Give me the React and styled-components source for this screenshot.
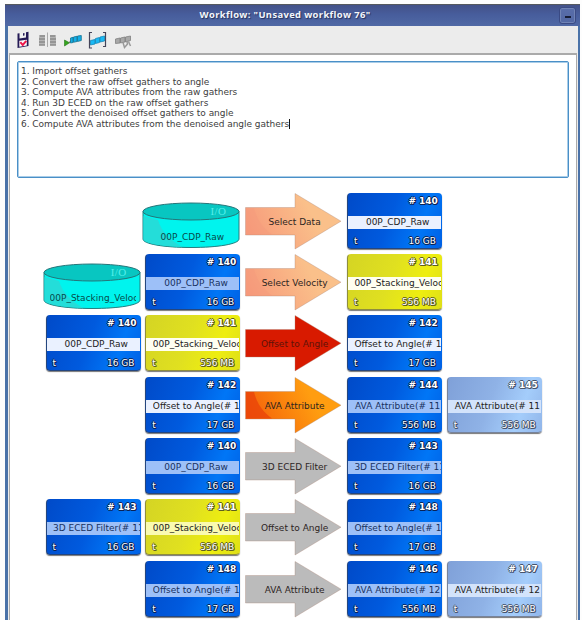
import React from "react";
import styled, { createGlobalStyle, css } from "styled-components";

const GlobalStyle = createGlobalStyle`
  * { box-sizing: border-box; }
  body { margin: 0; background: #fff; overflow: hidden; }
`;

const Page = styled.div`
  width: 582px;
  height: 620px;
  padding: 4px 2px 0 5px;
  overflow: hidden;
  background: #fdfdfd;
  font-family: "DejaVu Sans", sans-serif;
  font-size: 9px;
  color: #222;
`;

const Window = styled.div`
  height: 616px;
  display: flex;
  flex-direction: column;
  border: solid #4a72a8;
  border-width: 0 2px 0 3px;
  background: #ececec;
`;

const TitleBar = styled.header`
  flex: none;
  height: 22px;
  margin: 0 -2px 0 -3px;
  padding: 0 3px 0 0;
  display: grid;
  grid-template-columns: 6px 1fr 18px;
  align-items: center;
  border-top: 1px solid #55595f;
  background: linear-gradient(#435188, #475d9c 45%, #5069a5);
`;

const Title = styled.h1`
  margin: -2px 0 0;
  text-align: center;
  font: bold 9.4px/20px "Open Sans", sans-serif;
  letter-spacing: 0.37px;
  color: #f4f6fb;
  text-shadow: 1px 1px 1px #26335d;
  white-space: pre;
`;

const Minimize = styled.button`
  width: 17px;
  height: 17px;
  padding: 8px 0 0;
  display: flex;
  justify-content: center;
  border: 1px solid #3a4a84;
  border-radius: 3px;
  background: linear-gradient(#596da9, #5268a4);
  box-shadow: inset 0 0 0 1px #7083b5;
  &::before {
    content: "";
    width: 6px;
    height: 2px;
    background: #171d36;
  }
`;

const Toolbar = styled.div`
  flex: none;
  height: 27px;
  padding: 5px 0 0 9px;
  display: flex;
  align-items: flex-start;
  background: #ececec;
`;

const ToolIcon = styled.svg`
  flex: none;
  width: ${(p) => p.$w}px;
  height: 19px;
  margin-right: ${(p) => p.$gap || 0}px;
`;

const Content = styled.main`
  flex: 1;
  min-height: 0;
  margin: 0 1px;
  padding: 6px 6px 0 6px;
  border: solid #aaa;
  border-width: 2px 1px 0 1px;
  background: #fff;
  overflow: hidden;
`;

const Notes = styled.div`
  width: 552px;
  height: 117px;
  margin-left: 1px;
  padding: 3px 3px;
  border: 1px solid #4a8fc7;
  border-radius: 2px;
  box-shadow: inset 0 0 0 1px #a9cde8;
  background: #fff;
`;

const NoteLine = styled.div`
  height: 10.55px;
  line-height: 12px;
  white-space: pre;
  color: #404040;
  font-size: 9px;
  letter-spacing: -0.03px;
`;

const Caret = styled.span`
  display: inline-block;
  width: 1px;
  height: 10px;
  background: #111;
  vertical-align: -2px;
`;

const Flow = styled.div`
  padding: 14.5px 0 0 29.5px;
  display: flex;
  flex-direction: column;
  gap: 5.4px;
`;

const Step = styled.div`
  height: 56px;
  display: grid;
  grid-template-columns: 95px 95px 97px 95px 95px;
  column-gap: 4.8px;
  align-items: start;
`;

const palettes = {
  blue: { bg: "linear-gradient(110deg, #004ac8, #005ade 45%, #0076f6 75%, #0060e4)", line: "#24467f", outline: "#0a2254" },
  yellow: { bg: "linear-gradient(110deg, #d4d424, #e0e020 45%, #eeee10 75%, #dede18)", line: "#8e8d3e", outline: "#5d5d20" },
  pale: { bg: "linear-gradient(110deg, #7fa0d8, #8fb2e6 45%, #a4cdfb 75%, #91b5e9)", line: "#77839b", outline: "#46536b" },
};

const bands = {
  blue: "#9dc0f8",
  white: "#eaf1ff",
  pale: "#d3e3fb",
  cream: "#fffff0",
  lemon: "#fafab0",
};

const CardBox = styled.article`
  grid-column: ${(p) => p.$col};
  grid-row: 1;
  height: 56px;
  display: grid;
  grid-template-columns: minmax(0, 1fr);
  grid-template-rows: 22px 13px 1fr;
  border: 1px solid ${(p) => palettes[p.$tone].line};
  border-top-color: transparent;
  border-right-color: transparent;
  border-radius: 4px;
  background: ${(p) => palettes[p.$tone].bg} border-box;
  box-shadow: 0 1px 1px #777;
  overflow: hidden;
`;

const outlined = css`
  color: #fff;
  text-shadow: ${(p) => {
    const c = palettes[p.$tone].outline;
    return `1px 0 ${c}, -1px 0 ${c}, 0 1px ${c}, 0 -1px ${c}, 1px 1px ${c}`;
  }};
`;

const CardNumber = styled.div`
  ${outlined}
  padding-right: 3px;
  text-align: right;
  font-weight: bold;
  font-size: 9px;
  line-height: 15px;
  white-space: pre;
`;

const CardName = styled.div`
  margin: 0 -1px;
  padding: 0 1px 0 7.5px;
  background: ${(p) => bands[p.$band]};
  display: flex;
`;

const NameText = styled.span`
  flex: 1;
  min-width: 0;
  overflow: hidden;
  display: flex;
  justify-content: safe center;
  white-space: pre;
  line-height: 13px;
  color: ${(p) => (p.$band === "blue" ? "#17315f" : "#222")};
`;

const CardFoot = styled.div`
  ${outlined}
  padding: 0 5px 0 6px;
  display: flex;
  justify-content: space-between;
  line-height: 24px;
  font-size: 9px;
`;

const Overlay = styled.div`
  grid-column: ${(p) => p.$col};
  grid-row: 1;
  display: grid;
  & > * { grid-area: 1 / 1; }
`;

const ArrowShape = styled.svg`
  width: 97px;
  height: 57px;
  display: block;
`;

const ArrowLabel = styled.span`
  width: 97px;
  margin-left: 1px;
  text-align: center;
  line-height: 59px;
  white-space: pre;
  color: ${(p) => (p.$tone === "red" ? "#5f1208" : "#2d251f")};
`;

const DiskShape = styled.svg`
  width: 99px;
  height: 47px;
  margin: 9px 0 0 -4px;
  display: block;
`;

const DiskTag = styled.span`
  justify-self: end;
  margin: 11px 14px 0 0;
  font: 11px/14px "Liberation Serif", serif;
  letter-spacing: 0.4px;
  color: #55eeea;
`;

const DiskName = styled.span`
  margin: 37px 0 0 4px;
  width: 86px;
  height: 14px;
  overflow: hidden;
  display: flex;
  justify-content: safe center;
  line-height: 14px;
  white-space: pre;
  color: #064b4b;
`;

const arrowFills = {
  peach: ["#f79a7b", "#fac08a"],
  red: ["#d81a00", "#d81a00"],
  orange: ["#f4600a", "#ff9d10"],
  gray: ["#bbb", "#bbb"],
};

function Card({ col, id, name, size, tone = "blue", band = "blue" }) {
  return (
    <CardBox $col={col} $tone={tone}>
      <CardNumber $tone={tone}># {id}</CardNumber>
      <CardName $band={band}><NameText $band={band}>{name}</NameText></CardName>
      <CardFoot $tone={tone}><span>t</span><span>{size}</span></CardFoot>
    </CardBox>
  );
}

function Disk({ col, name }) {
  return (
    <Overlay $col={col}>
      <DiskShape viewBox="0 0 99 47">
        <path d="M2 9.500V37C2 42 23 45.500 50 45.500S98 42 98 37V9.500Z" fill="#00f4ee" stroke="#267d7f" />
        <path d="M2.500 14L17 18C21 31 30 38 41 45C18 44 3 41 2.500 37Z" fill="#24ddd9" />
        <ellipse cx="50" cy="9.500" rx="48" ry="8.500" fill="#08c6c1" stroke="#257579" />
      </DiskShape>
      <DiskTag>I/O</DiskTag>
      <DiskName>{name}</DiskName>
    </Overlay>
  );
}

function Arrow({ tone, label }) {
  const [from, to] = arrowFills[tone];
  const shine = tone === "peach" ? "#f3987c" : "#e83f08";
  return (
    <Overlay $col={3}>
      <ArrowShape viewBox="0 0 97 57">
        <defs>
          <linearGradient id={`arrow-${tone}`} x1="0" y1="0.6" x2="1" y2="0.3">
            <stop offset="0" stopColor={from} />
            <stop offset="0.7" stopColor={to} />
          </linearGradient>
        </defs>
        <path d="M0.500 14.500H50V0.500L96 28.200L50 56V42H0.500Z" fill={`url(#arrow-${tone})`} stroke="#a98576" strokeOpacity="0.5" strokeWidth="0.700" />
        {(tone === "peach" || tone === "orange") && (
          <path d="M1 15H9C12 27 18 35 27 41.500H1Z" fill={shine} opacity={tone === "peach" ? 0.35 : 0.7} />
        )}
      </ArrowShape>
      <ArrowLabel $tone={tone}>{label}</ArrowLabel>
    </Overlay>
  );
}

const raw = { id: 140, name: "00P_CDP_Raw", size: "16 GB" };
const velocity = { id: 141, name: "00P_Stacking_Veloc", size: "556 MB", tone: "yellow", band: "cream" };
const ava = (id, n) => ({ id, name: `AVA Attribute(# ${n}`, size: "556 MB" });
const angle = (id) => ({ id, name: "Offset to Angle(# 1", size: "17 GB" });
const eced = { id: 143, name: "3D ECED Filter(# 11", size: "16 GB" };

const steps = [
  { arrow: ["peach", "Select Data"], disk: [2, "00P_CDP_Raw"], cards: [{ ...raw, col: 4, band: "white" }] },
  { arrow: ["peach", "Select Velocity"], disk: [1, "00P_Stacking_Veloc"], cards: [{ ...raw, col: 2 }, { ...velocity, col: 4 }] },
  { arrow: ["red", "Offset to Angle"], cards: [{ ...raw, col: 1, band: "white" }, { ...velocity, col: 2 }, { ...angle(142), col: 4, band: "white" }] },
  { arrow: ["orange", "AVA Attribute"], cards: [{ ...angle(142), col: 2, band: "white" }, { ...ava(144, 11), col: 4 }, { ...ava(145, 11), col: 5, tone: "pale", band: "pale" }] },
  { arrow: ["gray", "3D ECED Filter"], cards: [{ ...raw, col: 2 }, { ...eced, col: 4 }] },
  { arrow: ["gray", "Offset to Angle"], cards: [{ ...eced, col: 1 }, { ...velocity, col: 2, band: "lemon" }, { ...angle(148), col: 4 }] },
  { arrow: ["gray", "AVA Attribute"], cards: [{ ...angle(148), col: 2 }, { ...ava(146, 12), col: 4 }, { ...ava(147, 12), col: 5, tone: "pale", band: "pale" }] },
];

const notes = [
  "1. Import offset gathers",
  "2. Convert the raw offset gathers to angle",
  "3. Compute AVA attributes from the raw gathers",
  "4. Run 3D ECED on the raw offset gathers",
  "5. Convert the denoised offset gathers to angle",
  "6. Compute AVA attributes from the denoised angle gathers",
];

function Tools() {
  return (
    <Toolbar>
      <ToolIcon $w={12} $gap={10} viewBox="0 0 12 19">
        <path d="M0.500 2.500L2.500 2.200V7.500L9 6.500V1.300L11.500 0.800V15L0.500 17Z" fill="#241a55" />
        <path d="M3.200 2.500L8.300 1.800V5.500L3.200 6.300Z" fill="#f3f3f3" />
        <path d="M6 2.200L7.500 2V4.500L6 4.800Z" fill="#241a55" />
        <path d="M2.300 9.800L9.800 8.800V14.500L2.300 15.700Z" fill="#fff" />
        <path d="M3.300 11.200L5.700 14L9.300 9.800" fill="none" stroke="#ed174b" strokeWidth="2" />
      </ToolIcon>
      <ToolIcon $w={17} $gap={8} viewBox="0 0 17 19">
        <path d="M0 4H6V14.500H0ZM11 4H17V14.500H11Z" fill="#b5b5b5" />
        <path d="M1 5H6M0 8H6M0 11H6M0 14H6M11 5H16M11 8H17M11 11H17M11 14H17" stroke="#777" />
        <path d="M8.500 1.500V16" stroke="#aaa" />
      </ToolIcon>
      <ToolIcon $w={18} $gap={6} viewBox="0 0 18 19">
        <path d="M0.500 9L5.500 11.800L0.500 15Z" fill="#34a51d" stroke="#257419" strokeWidth="0.600" />
        <path d="M5 11.500L7 10" stroke="#555" />
        <path d="M6.500 7L9 6.300V11.500L6.500 12ZM9.500 6L13 5.300V10.500L9.500 11.300ZM13.500 5L17.300 4.500V9.500L13.500 10.500Z" fill="#12aee7" stroke="#137293" strokeWidth="0.800" />
      </ToolIcon>
      <ToolIcon $w={19} $gap={8} viewBox="0 0 19 19">
        <path d="M4 1.500H1.500V17H4M15 1.500H17.500V15.500H15" fill="none" stroke="#45455a" strokeWidth="1.200" />
        <path d="M2.500 9.500L7 8.500V13L2.500 14ZM7.500 7.500L11.500 6.500V11.500L7.500 12.500ZM12 6L16.500 5V10L12 11Z" fill="#19b9f5" stroke="#1486b8" strokeWidth="0.800" />
      </ToolIcon>
      <ToolIcon $w={17} viewBox="0 0 17 19">
        <path d="M0.500 8L5 7V12L0.500 12.500ZM5.500 7L10 6V11L5.500 12ZM10.500 6L15.500 5V9.500L10.500 11Z" fill="#a8a8a8" stroke="#808080" strokeWidth="0.800" />
        <path d="M8 11.500L9.500 16.500L12.500 13L12 11M13.500 10.500L15.500 15" fill="none" stroke="#999" strokeWidth="1.500" />
      </ToolIcon>
    </Toolbar>
  );
}

export default function App() {
  return (
    <Page>
      <GlobalStyle />
      <Window>
        <TitleBar>
          <span />
          <Title>Workflow: "Unsaved workflow 76"</Title>
          <Minimize aria-label="Minimize" />
        </TitleBar>
        <Tools />
        <Content>
          <Notes>
            {notes.map((line, i) => (
              <NoteLine key={line}>{line}{i === notes.length - 1 && <Caret />}</NoteLine>
            ))}
          </Notes>
          <Flow>
            {steps.map((step, i) => (
              <Step key={i}>
                {step.disk && <Disk col={step.disk[0]} name={step.disk[1]} />}
                <Arrow tone={step.arrow[0]} label={step.arrow[1]} />
                {step.cards.map((card) => <Card key={card.col} {...card} />)}
              </Step>
            ))}
          </Flow>
        </Content>
      </Window>
    </Page>
  );
}
